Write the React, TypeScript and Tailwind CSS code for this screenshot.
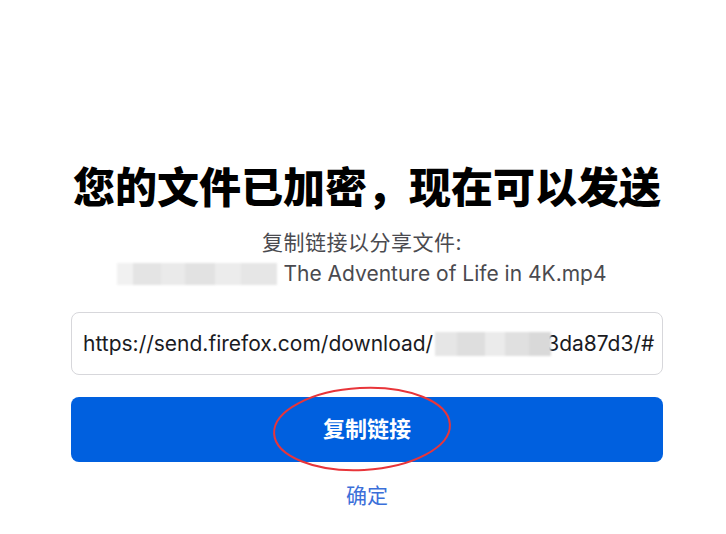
export default function App() {
  return (
    <div className="w-[726px] h-[534px] bg-white overflow-hidden font-['Inter','Noto_Sans_CJK_SC',sans-serif]">
      <div className="ml-[71px] w-[592px] pt-[163px] flex flex-col items-center">
        <h1 className="text-[42px] leading-[50px] font-black text-black whitespace-nowrap">
          您的文件已加密，现在可以发送
        </h1>
        <p className="mt-[16px] text-[21px] leading-[28px] text-[#4a4a4f] pr-[10px] tracking-[0.5px]">复制链接以分享文件:</p>
        <div className="mt-[3px] flex items-center text-[21px] leading-[28px] text-[#4a4a4f] -ml-[10px]">
          <div className="flex h-[22px] w-[160px] mr-[6px] blur-[1px]">
            <div className="w-[16px] bg-[#f1f1f1]" />
            <div className="w-[28px] bg-[#e4e4e4]" />
            <div className="w-[24px] bg-[#eaeaea]" />
            <div className="w-[30px] bg-[#e2e2e2]" />
            <div className="w-[26px] bg-[#ececec]" />
            <div className="w-[36px] bg-[#e6e6e6]" />
          </div>
          <span>The Adventure of Life in 4K.mp4</span>
        </div>
        <div className="mt-[24px] w-full h-[63px] border border-[#d7d7db] rounded-[8px] flex items-center px-[11px] overflow-hidden">
          <span className="text-[21px] text-[#1b1b1f] whitespace-nowrap flex items-center">
            https://send.firefox.com/download/
            <span className="inline-flex h-[24px] w-[116px] ml-[2px] -mr-[5px] blur-[1px] relative z-10">
              <span className="w-[22px] bg-[#e6e6e6]" />
              <span className="w-[28px] bg-[#dedede]" />
              <span className="w-[20px] bg-[#ebebeb]" />
              <span className="w-[24px] bg-[#e0e0e0]" />
              <span className="w-[22px] bg-[#d9d9d9]" />
            </span>
            3da87d3/#
          </span>
        </div>
        <div className="relative mt-[22px] w-full">
          <button className="w-full h-[65px] bg-[#0060df] rounded-[8px] text-white text-[22px] font-bold">
            复制链接
          </button>
          <svg className="absolute left-[200px] -top-[12px] pointer-events-none" width="182" height="88" viewBox="0 0 182 88">
            <ellipse cx="91" cy="44" rx="88" ry="41" fill="none" stroke="#e8353a" strokeWidth="2" transform="rotate(-3 91 44)" />
          </svg>
        </div>
        <a className="mt-[20px] text-[21px] leading-[28px] text-[#3b6fd9]">确定</a>
      </div>
    </div>
  );
}
